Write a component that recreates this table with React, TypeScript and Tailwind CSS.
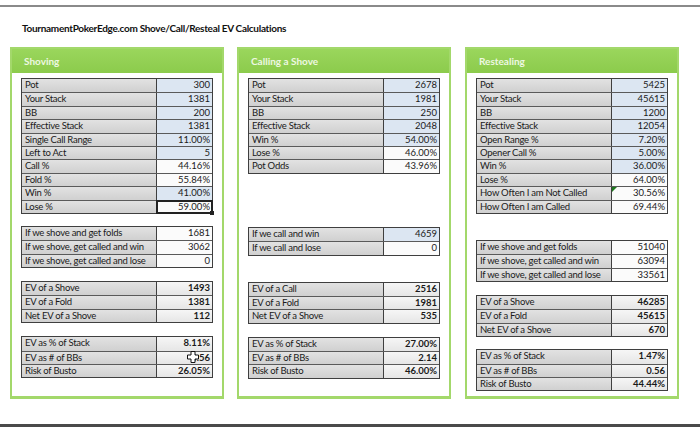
import React from "react";

type Row = {
  label: string;
  value: string;
  tone?: "blue" | "white" | "gray";
  bold?: boolean;
  selected?: boolean;
  flag?: boolean;
  cursor?: boolean;
};

type Block = { mt: string; rows: Row[] };

type Panel = { title: string; blocks: Block[] };

const panels: Panel[] = [
  {
    title: "Shoving",
    blocks: [
      {
        mt: "mt-[5px]",
        rows: [
          { label: "Pot", value: "300", tone: "blue" },
          { label: "Your Stack", value: "1381", tone: "blue" },
          { label: "BB", value: "200", tone: "blue" },
          { label: "Effective Stack", value: "1381", tone: "blue" },
          { label: "Single Call Range", value: "11.00%", tone: "blue" },
          { label: "Left to Act", value: "5", tone: "blue" },
          { label: "Call %", value: "44.16%", tone: "white" },
          { label: "Fold %", value: "55.84%", tone: "white" },
          { label: "Win %", value: "41.00%", tone: "blue" },
          { label: "Lose %", value: "59.00%", tone: "white", selected: true },
        ],
      },
      {
        mt: "mt-[12px]",
        rows: [
          { label: "If we shove and get folds", value: "1681", tone: "white" },
          { label: "If we shove, get called and win", value: "3062", tone: "white" },
          { label: "If we shove, get called and lose", value: "0", tone: "white" },
        ],
      },
      {
        mt: "mt-[13px]",
        rows: [
          { label: "EV of a Shove", value: "1493", tone: "gray", bold: true },
          { label: "EV of a Fold", value: "1381", tone: "gray", bold: true },
          { label: "Net EV of a Shove", value: "112", tone: "gray", bold: true },
        ],
      },
      {
        mt: "mt-[13px]",
        rows: [
          { label: "EV as % of Stack", value: "8.11%", tone: "gray", bold: true },
          { label: "EV as # of BBs", value: "0.56", tone: "gray", bold: true, cursor: true },
          { label: "Risk of Busto", value: "26.05%", tone: "gray", bold: true },
        ],
      },
    ],
  },
  {
    title: "Calling a Shove",
    blocks: [
      {
        mt: "mt-[5px]",
        rows: [
          { label: "Pot", value: "2678", tone: "blue" },
          { label: "Your Stack", value: "1981", tone: "blue" },
          { label: "BB", value: "250", tone: "blue" },
          { label: "Effective Stack", value: "2048", tone: "blue" },
          { label: "Win %", value: "54.00%", tone: "blue" },
          { label: "Lose %", value: "46.00%", tone: "white" },
          { label: "Pot Odds", value: "43.96%", tone: "white" },
        ],
      },
      {
        mt: "mt-[53px]",
        rows: [
          { label: "If we call and win", value: "4659", tone: "blue" },
          { label: "If we call and lose", value: "0", tone: "white" },
        ],
      },
      {
        mt: "mt-[26px]",
        rows: [
          { label: "EV of a Call", value: "2516", tone: "gray", bold: true },
          { label: "EV of a Fold", value: "1981", tone: "gray", bold: true },
          { label: "Net EV of a Shove", value: "535", tone: "gray", bold: true },
        ],
      },
      {
        mt: "mt-[13px]",
        rows: [
          { label: "EV as % of Stack", value: "27.00%", tone: "gray", bold: true },
          { label: "EV as # of BBs", value: "2.14", tone: "gray", bold: true },
          { label: "Risk of Busto", value: "46.00%", tone: "gray", bold: true },
        ],
      },
    ],
  },
  {
    title: "Restealing",
    blocks: [
      {
        mt: "mt-[5px]",
        rows: [
          { label: "Pot", value: "5425", tone: "blue" },
          { label: "Your Stack", value: "45615", tone: "blue" },
          { label: "BB", value: "1200", tone: "blue" },
          { label: "Effective Stack", value: "12054", tone: "blue" },
          { label: "Open Range %", value: "7.20%", tone: "blue" },
          { label: "Opener Call %", value: "5.00%", tone: "blue" },
          { label: "Win %", value: "36.00%", tone: "blue" },
          { label: "Lose %", value: "64.00%", tone: "white" },
          { label: "How Often I am Not Called", value: "30.56%", tone: "white", flag: true },
          { label: "How Often I am Called", value: "69.44%", tone: "white" },
        ],
      },
      {
        mt: "mt-[26px]",
        rows: [
          { label: "If we shove and get folds", value: "51040", tone: "white" },
          { label: "If we shove, get called and win", value: "63094", tone: "white" },
          { label: "If we shove, get called and lose", value: "33561", tone: "white" },
        ],
      },
      {
        mt: "mt-[13px]",
        rows: [
          { label: "EV of a Shove", value: "46285", tone: "gray", bold: true },
          { label: "EV of a Fold", value: "45615", tone: "gray", bold: true },
          { label: "Net EV of a Shove", value: "670", tone: "gray", bold: true },
        ],
      },
      {
        mt: "mt-[12px]",
        rows: [
          { label: "EV as % of Stack", value: "1.47%", tone: "gray", bold: true },
          { label: "EV as # of BBs", value: "0.56", tone: "gray", bold: true },
          { label: "Risk of Busto", value: "44.44%", tone: "gray", bold: true },
        ],
      },
    ],
  },
];

const toneClass = {
  blue: "bg-[#dce6f2]",
  white: "bg-[#fbfbfb]",
  gray: "bg-gradient-to-b from-[#f6f6f6] to-[#e6e6e6]",
};

// excel's fat white cross pointer
function Cursor() {
  return (
    <svg
      className="absolute right-[13px] top-[-1px]"
      width="12"
      height="12"
      viewBox="0 0 12 12"
    >
      <path
        d="M4 0.5h4v3.5h3.5v4h-3.5v3.5h-4v-3.5h-3.5v-4h3.5z"
        fill="#fff"
        stroke="#111"
        strokeWidth="1"
      />
    </svg>
  );
}

function Table({ block }: { block: Block }) {
  return (
    <div className={`${block.mt} w-[192px] border border-[#3f3f3f]`}>
      {block.rows.map((r, i) => (
        <div
          key={r.label}
          className={`flex h-[13.4px] ${i > 0 ? "border-t border-[#5a5a5a]" : ""}`}
        >
          <div className="w-[135px] shrink-0 overflow-hidden whitespace-nowrap border-r border-[#3f3f3f] bg-gradient-to-b from-[#e2e2e2] to-[#d0d0d0] pl-[3px] leading-[12.4px] tracking-[-0.25px] text-[#1a1a1a]">
            {r.label}
          </div>
          <div
            className={`relative flex-1 whitespace-nowrap pr-[2px] text-right leading-[12.4px] text-[#1a1a1a] ${toneClass[r.tone ?? "white"]} ${r.bold ? "font-bold" : ""}`}
          >
            {r.selected && (
              <div className="pointer-events-none absolute inset-[-1px] border-2 border-[#222]">
                <div className="absolute bottom-[-3px] right-[-3px] h-[4px] w-[4px] bg-[#222]" />
              </div>
            )}
            {r.flag && (
              <svg className="absolute left-0 top-0" width="5" height="5" viewBox="0 0 5 5">
                <path d="M0 0h5L0 5z" fill="#1f7a1f" />
              </svg>
            )}
            {r.value}
            {r.cursor && <Cursor />}
          </div>
        </div>
      ))}
    </div>
  );
}

export default function App() {
  return (
    <div
      className="relative flex h-[427px] w-[700px] flex-col overflow-hidden bg-white"
      style={{ fontFamily: "Lato, 'Liberation Sans', sans-serif" }}
    >
      <div className="mt-[5px] h-[2px] bg-[#8a8a8a]" />
      <div className="mt-[15px] pl-[22px] text-[10px] font-bold leading-[13px] tracking-[-0.3px] text-[#111]">
        TournamentPokerEdge.com Shove/Call/Resteal EV Calculations
      </div>

      <div className="ml-[10px] mt-[12px] flex gap-[13px]">
        {panels.map((p, i) => (
          <div
            key={p.title}
            className={`flex h-[352px] w-[214px] flex-col border-2 border-b-[3px] border-[#a3d86b] ${i === 2 ? "ml-[1px]" : ""}`}
          >
            <div className="h-[24px] bg-gradient-to-b from-[#9ad65c] to-[#8ccb4c] pl-[12px] text-[10px] font-bold leading-[24px] text-[#eef8e2]">
              {p.title}
            </div>
            <div className="pl-[9px] text-[9.5px]">
              {p.blocks.map((b, j) => (
                <Table key={j} block={b} />
              ))}
            </div>
          </div>
        ))}
      </div>

      <div className="absolute bottom-0 left-0 h-[3px] w-full bg-[#4a4a4a]" />
    </div>
  );
}
